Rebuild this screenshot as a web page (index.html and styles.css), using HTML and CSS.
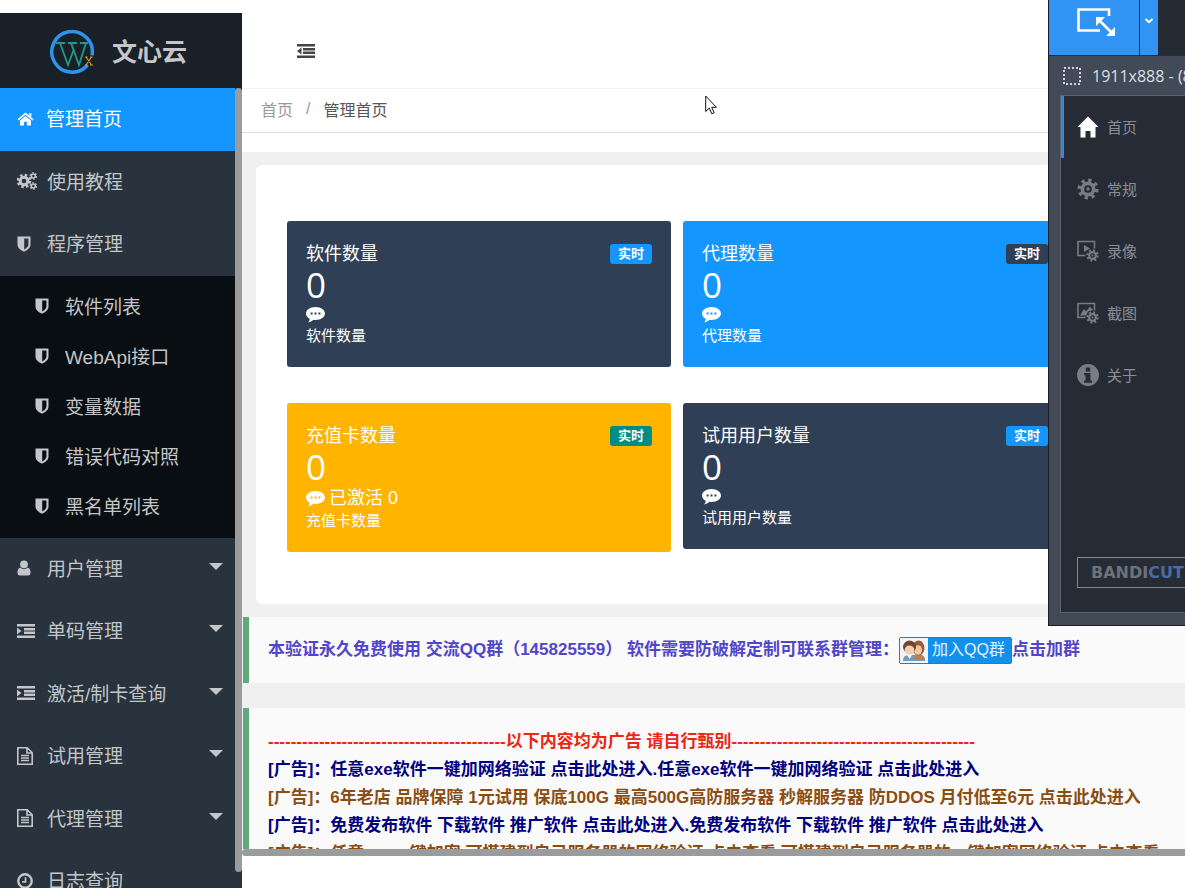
FILE: index.html
```html
<!DOCTYPE html>
<html lang="zh-CN">
<head>
<meta charset="utf-8">
<title>文心云</title>
<link rel="stylesheet" href="styles.css">
</head>
<body>
<svg class="defs" aria-hidden="true">
  <symbol id="shield" viewBox="0 0 14 16"><path fill-rule="evenodd" d="M.5.5h13v8c0 3.500-3.200 5.700-6.500 7.200C3.700 14.200.5 12 .5 8.500zM7.200 2.400v11c2.200-1.200 4.200-2.700 4.200-4.900V2.400z"/></symbol>
  <symbol id="gear" viewBox="0 0 24 24"><g fill="none" stroke="currentColor"><circle cx="12" cy="12" r="6.200" stroke-width="4"/><circle cx="12" cy="12" r="9.500" stroke-width="4" stroke-dasharray="3.500 3.960"/></g><circle cx="12" cy="12" r="1.800"/></symbol>
  <symbol id="indent" viewBox="0 0 18 14"><path d="M0 0h18v2.400H0zM7 4h11v2.400H7zM7 7.600h11V10H7zM0 11.600h18V14H0zM0 3.500 4.500 7 0 10.500z"/></symbol>
  <symbol id="outdent" viewBox="0 0 18 14"><path d="M0 0h18v2.400H0zM6 4h12v2.400H6zM6 7.600h12V10H6zM0 11.600h18V14H0zM4.500 3.500 0 7l4.500 3.500z"/></symbol>
  <symbol id="file" viewBox="0 0 16 18"><path fill="none" stroke="currentColor" stroke-width="1.600" d="M.8.8h9.400l5 5v11.400H.8zM10 .8v5.200h5.200M4 8.500h8M4 11h8M4 13.500h8"/></symbol>
  <symbol id="comment" viewBox="0 0 19 16"><path fill-rule="evenodd" d="M9.500 0C14.700 0 19 2.900 19 6.500S14.700 13 9.500 13c-.8 0-1.500-.1-2.200-.2-1.300 1.500-3 2.400-5.300 2.700 1-1 1.600-2.100 1.700-3.800C1.400 10.500 0 8.600 0 6.500 0 2.900 4.300 0 9.500 0zM4.600 5.500v2h2v-2zm3.900 0v2h2v-2zm3.900 0v2h2v-2z"/></symbol>
</svg>

<aside class="sidebar">
  <div class="brand">
    <svg class="brand-logo" viewBox="0 0 46 46" aria-hidden="true">
      <path d="M43 26.500A20.300 20.300 0 1 0 38.500 36" fill="none" stroke="#2b95ee" stroke-width="3.500"/>
      <path d="M7 14h9M19 14h9M31 14h8M11 14l8 22 6-16M22 14l8 22 7-22" fill="none" stroke="#219a8e" stroke-width="1.800"/>
      <path d="M37 28l5.500 8M42.500 28 37 36M36 28h2.500M41 28h2.500M36 36h2.500M41 36h3" fill="none" stroke="#d9952b" stroke-width="1.200"/>
    </svg>
    <span class="brand-name">文心云</span>
  </div>
  <nav>
    <ul class="menu">
      <li class="menu-item active"><a href="#"><svg class="ico" viewBox="0 0 18 16"><path d="M9 1 17.500 8.200l-1.200 1.300L9 3.400 1.700 9.500.5 8.200zM12.800 1.800h2.400v4l-2.400-2zM9 4.700l5.800 4.800V15h-4.300v-4h-3v4H3.200V9.500z"/></svg>管理首页</a></li>
      <li class="menu-item"><a href="#"><svg class="ico ico-wide" viewBox="0 0 20 18"><g fill="none" stroke="currentColor"><circle cx="7" cy="9" r="3.800" stroke-width="3"/><circle cx="7" cy="9" r="6" stroke-width="2.500" stroke-dasharray="2.500 2.210"/><circle cx="16.300" cy="4" r="2" stroke-width="1.600"/><circle cx="16.300" cy="4" r="3.200" stroke-width="1.200" stroke-dasharray="1.700 1.650"/><circle cx="16.300" cy="14" r="2" stroke-width="1.600"/><circle cx="16.300" cy="14" r="3.200" stroke-width="1.200" stroke-dasharray="1.700 1.650"/></g></svg>使用教程</a></li>
      <li class="menu-item"><a href="#"><svg class="ico ico-slim"><use href="#shield"/></svg>程序管理</a>
        <ul class="submenu">
          <li><a href="#"><svg class="ico ico-slim"><use href="#shield"/></svg>软件列表</a></li>
          <li><a href="#"><svg class="ico ico-slim"><use href="#shield"/></svg>WebApi接口</a></li>
          <li><a href="#"><svg class="ico ico-slim"><use href="#shield"/></svg>变量数据</a></li>
          <li><a href="#"><svg class="ico ico-slim"><use href="#shield"/></svg>错误代码对照</a></li>
          <li><a href="#"><svg class="ico ico-slim"><use href="#shield"/></svg>黑名单列表</a></li>
        </ul>
      </li>
      <li class="menu-item more"><a href="#"><svg class="ico ico-slim" viewBox="0 0 14 16"><circle cx="7" cy="4.300" r="3.900"/><path d="M3.500 7.500C1.200 8 .5 10 .5 12.500c0 2 .8 3 2.300 3h8.400c1.500 0 2.300-1 2.300-3 0-2.500-.7-4.500-3-5C9.500 8.600 8.400 9 7 9s-2.500-.4-3.500-1.500z"/></svg>用户管理</a></li>
      <li class="menu-item more"><a href="#"><svg class="ico"><use href="#indent"/></svg>单码管理</a></li>
      <li class="menu-item more"><a href="#"><svg class="ico"><use href="#indent"/></svg>激活/制卡查询</a></li>
      <li class="menu-item more"><a href="#"><svg class="ico ico-file"><use href="#file"/></svg>试用管理</a></li>
      <li class="menu-item more"><a href="#"><svg class="ico ico-file"><use href="#file"/></svg>代理管理</a></li>
      <li class="menu-item"><a href="#"><svg class="ico ico-file" viewBox="0 0 16 16"><g fill="none" stroke="currentColor"><circle cx="8" cy="8" r="6.700" stroke-width="2.400"/><path stroke-width="1.700" d="M8.500 4.200v4.600H5.200"/></g></svg>日志查询</a></li>
    </ul>
  </nav>
  <div class="scroll-y"></div>
</aside>

<main class="main">
  <header class="topbar">
    <button class="fold" type="button" aria-label="收起菜单"><svg viewBox="0 0 18 14"><use href="#outdent"/></svg></button>
  </header>
  <nav class="crumbs"><a href="#">首页</a><span>/</span><strong>管理首页</strong></nav>
  <div class="content">
    <section class="panel">
      <article class="stat navy"><h3>软件数量</h3><span class="badge bg-blue">实时</span><p class="num">0</p><p class="note-row"><svg class="bubble"><use href="#comment"/></svg></p><p class="small">软件数量</p></article>
      <article class="stat blue"><h3>代理数量</h3><span class="badge bg-navy">实时</span><p class="num">0</p><p class="note-row"><svg class="bubble"><use href="#comment"/></svg></p><p class="small">代理数量</p></article>
      <article class="stat amber"><h3>充值卡数量</h3><span class="badge bg-teal">实时</span><p class="num">0</p><p class="note-row"><svg class="bubble"><use href="#comment"/></svg><span>已激活 0</span></p><p class="small">充值卡数量</p></article>
      <article class="stat navy"><h3>试用用户数量</h3><span class="badge bg-blue">实时</span><p class="num">0</p><p class="note-row"><svg class="bubble"><use href="#comment"/></svg></p><p class="small">试用用户数量</p></article>
    </section>
    <section class="notice contact">
      <span>本验证永久免费使用 交流QQ群（145825559） 软件需要防破解定制可联系群管理：</span>
      <a class="qq" href="#"><svg viewBox="0 0 28 25" aria-hidden="true"><rect width="28" height="25" fill="#edf5fb"/><path d="M3 23c0-4 2-6 6-6h10c4 0 6 2 6 6z" fill="#6f9dc2"/><path d="M13 22c0-4 2-6 5-6s7 2 7 6z" fill="#b98257"/><ellipse cx="18.500" cy="10" rx="6" ry="7.500" fill="#9c5b34"/><ellipse cx="18" cy="12" rx="4" ry="4.800" fill="#f1c7a0"/><circle cx="9.500" cy="9" r="6.500" fill="#75442e"/><ellipse cx="9.500" cy="12" rx="4.800" ry="4.600" fill="#f4ceb0"/><path d="M7 17l2.500 4 2.500-4z" fill="#fff"/></svg><span>加入QQ群</span></a><a href="#">点击加群</a>
    </section>
    <section class="notice ads">
      <p class="red">------------------------------------------以下内容均为广告 请自行甄别-------------------------------------------</p>
      <p><a class="ink" href="#">[广告]：任意exe软件一键加网络验证 点击此处进入.任意exe软件一键加网络验证 点击此处进入</a></p>
      <p><a class="brown" href="#">[广告]：6年老店 品牌保障 1元试用 保底100G 最高500G高防服务器 秒解服务器 防DDOS 月付低至6元 点击此处进入</a></p>
      <p><a class="ink" href="#">[广告]：免费发布软件 下载软件 推广软件 点击此处进入.免费发布软件 下载软件 推广软件 点击此处进入</a></p>
      <p><a class="brown" href="#">[广告]：任意exe一键加密 可搭建到自己服务器的网络验证 点击查看.可搭建到自己服务器的一键加密网络验证 点击查看</a></p>
    </section>
  </div>
  <div class="scroll-x"></div>
</main>

<aside class="recorder">
  <div class="rec-top">
    <button class="rec-mode" type="button" aria-label="区域"><svg viewBox="0 0 40 30"><path fill="none" stroke="#fff" stroke-width="2.600" d="M33 9V2.500H2.500v21H24"/><path fill="none" stroke="#fff" stroke-width="2.600" d="M23 13l12.500 12.500"/><path fill="#fff" d="M20 10h9l-9 9zM39 29h-9l9-9z"/></svg></button>
    <button class="rec-drop" type="button" aria-label="更多"><svg viewBox="0 0 10 6"><path fill="none" stroke="#fff" stroke-width="2" d="M1.500 1 5 4.200 8.500 1"/></svg></button>
  </div>
  <div class="rec-size"><svg viewBox="0 0 18 18"><rect x="1" y="1" width="16" height="16" fill="none" stroke="#fff" stroke-width="1.500" stroke-dasharray="2 2"/></svg><span>1911x888 - (8</span></div>
  <div class="rec-body">
    <ul>
      <li class="on"><svg viewBox="0 0 22 22"><path d="M11 .5 21.500 11h-3v10.500h-5V15h-5v6.500h-5V11h-3z"/></svg>首页</li>
      <li><svg viewBox="0 0 24 24"><use href="#gear"/></svg>常规</li>
      <li><svg viewBox="0 0 22 22"><path fill="none" stroke="currentColor" stroke-width="1.600" d="M8.500 15.500H1V1.500h16.500v7"/><path d="M7 5l6 3.500L7 12z"/><use href="#gear" x="9" y="9" width="13" height="13"/></svg>录像</li>
      <li><svg viewBox="0 0 22 22"><path fill="none" stroke="currentColor" stroke-width="1.600" d="M8.500 15.500H1V1.500h16.500v7"/><path d="M3 13.500 7 7l2 2.500 4-5 3 3.500-5 1.500-2 4z"/><use href="#gear" x="9" y="9" width="13" height="13"/></svg>截图</li>
      <li><svg viewBox="0 0 22 22"><path fill-rule="evenodd" d="M11 0a11 11 0 1 1 0 22 11 11 0 0 1 0-22zM8.800 3.500v4h4.400v-4zM7 9v2.200h1.600v5.300H7v2.200h8v-2.200h-1.600V9z"/></svg>关于</li>
    </ul>
    <div class="bandicut">BANDI<b>CUT</b></div>
  </div>
</aside>

<svg class="cursor" viewBox="0 0 12 20" aria-hidden="true"><path d="M.7 1v15.500l3.600-3.400 2.500 5.700 2.400-1.100-2.500-5.400h4.700z" fill="#fff" stroke="#111"/></svg>
</body>
</html>
```
FILE: styles.css
```css
* { box-sizing: border-box; }
body {
  margin: 0;
  padding-top: 13px;
  height: 100vh;
  display: flex;
  overflow: hidden;
  position: relative;
  background: #fff;
  font-family: "Liberation Sans", "Noto Sans CJK SC", sans-serif;
}
ul, p, h3 { margin: 0; padding: 0; list-style: none; }
a { color: inherit; text-decoration: none; }
button { border: 0; padding: 0; background: none; }
svg { fill: currentColor; flex: none; }
.defs { position: absolute; width: 0; height: 0; }

/* Sidebar */
.sidebar {
  flex: 0 0 242px;
  position: relative;
  overflow: hidden;
  background: #28333e;
  color: #c4c6c9;
}
.brand {
  height: 75px;
  padding-left: 49px;
  display: flex;
  align-items: center;
  gap: 17px;
  background: #192027;
}
.brand-logo { width: 46px; height: 46px; margin-top: 2px; }
.brand-name { padding-bottom: 2px; font-size: 25px; font-weight: bold; }
.menu { width: 235px; font-size: 19px; }
.menu-item > a { height: 62px; display: flex; align-items: center; padding: 0 12px 4px 16px; }
.menu-item:nth-child(odd) > a { height: 63px; }
.menu-item.active > a { background: #1496ff; color: #fff; }
.ico { width: 18px; height: 14px; margin: 2px 12px 0 1px; }
.active .ico { height: 16px; width: 17px; margin-right: 12px; }
.ico-wide { width: 20px; height: 18px; margin-right: 10px; }
.ico-slim { width: 14px; height: 16px; margin-right: 16px; }
.ico-file { width: 16px; height: 18px; margin-right: 14px; }
.submenu { padding: 6px 0; background: #090e12; }
.submenu a { height: 50px; display: flex; align-items: center; padding: 0 0 4px 34px; }
.more > a::after {
  content: "";
  margin: 0 0 2px auto;
  border: 7px solid transparent;
  border-top-color: currentColor;
  border-bottom: 0;
}
.scroll-y {
  position: absolute;
  top: 75px;
  right: 0;
  bottom: 16px;
  width: 7px;
  border-radius: 4px;
  background: #999b9d;
}

/* Main column */
.main { flex: 1; min-width: 0; display: flex; flex-direction: column; padding-bottom: 32px; }
.topbar { flex: none; height: 76px; padding: 0 55px; display: flex; align-items: center; border-bottom: 1px solid #f3f3f3; }
.fold { color: #444; display: flex; }
.fold svg { width: 18px; height: 14px; }
.crumbs {
  flex: none;
  height: 44px;
  padding: 0 19px 3px;
  display: flex;
  align-items: center;
  gap: 13px;
  border-bottom: 1px solid #dedede;
  font-size: 16px;
  color: #999;
}
.crumbs strong { font-weight: normal; color: #555; }
.content {
  flex: 1;
  min-height: 0;
  overflow: hidden;
  margin-top: 19px;
  padding-top: 13px;
  background: #f0f0f0;
}
.scroll-x { flex: none; height: 7px; border-radius: 4px 0 0 4px; background: #999b9d; }

.panel {
  margin-left: 14px;
  padding: 56px 31px 52px;
  display: grid;
  grid-template-columns: repeat(2, minmax(0, 384px));
  gap: 36px 12px;
  align-items: start;
  border-radius: 6px 0 0 6px;
  background: #fff;
}
.stat {
  padding: 20px 19px;
  display: grid;
  grid-template-columns: 1fr auto;
  align-items: center;
  border-radius: 3px;
  color: #fff;
}
.navy, .bg-navy { background: #2f4056; }
.blue, .bg-blue { background: #1496ff; }
.amber { background: #ffb400; }
.bg-teal { background: #008d83; }
.stat h3 { font-size: 18px; font-weight: normal; line-height: 26px; }
.stat p { grid-column: 1 / -1; }
.badge { width: 42px; border-radius: 3px; font-size: 13px; line-height: 20px; font-weight: bold; text-align: center; }
.num { font: 35px/36px "Open Sans", sans-serif; }
.note-row { min-height: 22px; padding-top: 2px; display: flex; align-items: center; gap: 4px; font-size: 18px; line-height: 23px; }
.bubble { width: 19px; height: 16px; }
.stat .small { font-size: 15px; line-height: 22px; }

.notice {
  margin: 13px 0 0 1px;
  padding: 19px;
  border-left: 6px solid #5fa97b;
  background: #fafafa;
  font-size: 17px;
  font-weight: bold;
  line-height: 28px;
  white-space: nowrap;
}
.contact { display: flex; align-items: center; color: #5145c9; }
.qq {
  height: 27px;
  width: 113px;
  display: flex;
  align-items: center;
  gap: 4px;
  border: 1px solid #1a7fce;
  border-radius: 2px;
  background: #1191ec;
  color: #e3f3ff;
  font-size: 16px;
  font-weight: normal;
}
.qq svg { width: 28px; height: 25px; }
.ads { margin-top: 25px; padding-top: 20px; }
.red { color: #ee2510; }
.ink { color: #000080; }
.brown { color: #8b4d12; }

/* Floating recorder window */
.recorder {
  position: absolute;
  top: 0;
  right: 0;
  width: 137px;
  height: 626px;
  display: flex;
  flex-direction: column;
  overflow: hidden;
  border: 1px solid #191e26;
  border-width: 0 0 1px 1px;
  background: #424a58;
  color: #8b8f95;
}
.rec-top { flex: none; height: 56px; display: flex; gap: 1px; background: #252b33; border-bottom: 1px solid #1e2f48; }
.rec-mode, .rec-drop { background: #3194f4; display: flex; justify-content: center; }
.rec-mode { width: 90px; padding: 7px 0 0 4px; }
.rec-mode svg { width: 40px; height: 30px; }
.rec-drop { width: 18px; padding-top: 18px; }
.rec-drop svg { width: 10px; height: 6px; }
.rec-size {
  height: 39px;
  flex: none;
  padding-left: 14px;
  display: flex;
  align-items: center;
  gap: 11px;
  font: 16px "Open Sans", sans-serif;
  white-space: nowrap;
  color: #dcdfe3;
}
.rec-size svg { width: 18px; height: 18px; }
.rec-body {
  flex: 1;
  margin: 0 0 12px 11px;
  display: flex;
  flex-direction: column;
  justify-content: space-between;
  border: 1px solid #5b6370;
  border-right: 0;
  background: #262c35;
}
.rec-body li { height: 62px; padding: 0 0 2px 13px; display: flex; align-items: center; gap: 8px; border-left: 3px solid transparent; font-size: 15px; }
.rec-body li > svg { width: 22px; height: 22px; margin-top: 2px; color: #777d84; }
.rec-body li.on { border-color: #3c86d8; }
.rec-body li.on > svg { color: #fff; }
.bandicut {
  height: 31px;
  margin: 0 0 24px 16px;
  padding-left: 13px;
  overflow: hidden;
  border: 1px solid #858a90;
  border-right: 0;
  font: bold 16px/29px "DejaVu Sans", sans-serif;
  color: #6d7279;
}
.bandicut b { color: #466ba8; }
.cursor { position: absolute; left: 705px; top: 95px; width: 12px; height: 20px; }
```
